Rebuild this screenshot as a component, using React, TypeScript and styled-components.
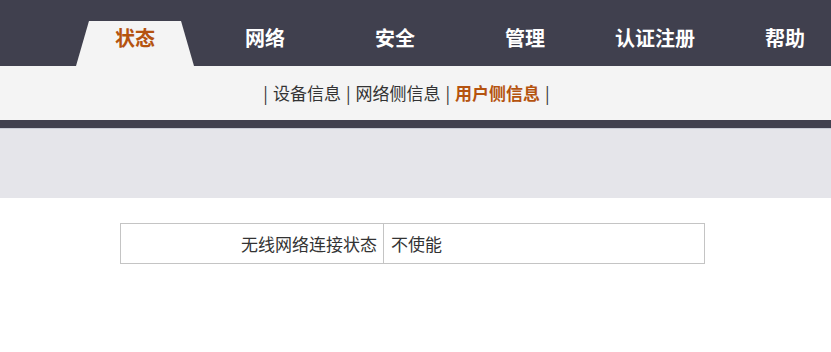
import React from "react";
import styled, { createGlobalStyle } from "styled-components";

const GlobalStyle = createGlobalStyle`
  html, body {
    margin: 0;
    padding: 0;
    background: #ffffff;
    font-family: "Noto Sans CJK SC", "Noto Sans", sans-serif;
  }
`;

const Header = styled.header`
  height: 66px;
  background: #40404e;
  display: flex;
  align-items: flex-end;
  padding-left: 76px;
`;

const Nav = styled.nav`
  display: flex;
  gap: 12px;
`;

const NavItem = styled.a<{ $active?: boolean }>`
  width: 118px;
  height: 45px;
  box-sizing: border-box;
  padding-top: 4px;
  display: flex;
  justify-content: center;
  font-size: 20px;
  font-weight: 700;
  line-height: 26px;
  color: ${(p) => (p.$active ? "#b5530f" : "#ffffff")};
  background: ${(p) => (p.$active ? "#f4f4f4" : "transparent")};
  clip-path: polygon(11% 0, 89% 0, 100% 100%, 0 100%);
  cursor: pointer;
`;

const SubBar = styled.div`
  height: 54px;
  background: #f4f4f4;
  display: flex;
  align-items: center;
  justify-content: center;
  font-size: 17px;
  color: #333333;
  padding-bottom: 1px;
  padding-right: 18px;
  box-sizing: border-box;
`;

const Sep = styled.span`
  margin: 0 5px;
  color: #333333;
`;

const SubLink = styled.span<{ $active?: boolean }>`
  color: ${(p) => (p.$active ? "#b5530f" : "#333333")};
  font-weight: ${(p) => (p.$active ? 700 : 400)};
`;

const Strip = styled.div`
  height: 8px;
  background: #41414f;
  border-bottom: 1px solid #c9ccd6;
`;

const Band = styled.div`
  height: 69px;
  background: #e5e5ea;
`;

const Content = styled.main`
  padding-top: 25px;
  display: flex;
  padding-left: 120px;
`;

const Table = styled.table`
  width: 585px;
  border-collapse: collapse;
  font-size: 17px;
  color: #333333;
`;

const Cell = styled.td<{ $label?: boolean }>`
  border: 1px solid #c4c4c4;
  height: 39px;
  padding: 0 6px 0 7px;
  text-align: ${(p) => (p.$label ? "right" : "left")};
  width: ${(p) => (p.$label ? "249px" : "auto")};
`;

const navItems = ["状态", "网络", "安全", "管理", "认证注册", "帮助"];
const subItems = ["设备信息", "网络侧信息", "用户侧信息"];

export default function App() {
  return (
    <>
      <GlobalStyle />
      <Header>
        <Nav>
          {navItems.map((n, i) => (
            <NavItem key={n} $active={i === 0}>
              {n}
            </NavItem>
          ))}
        </Nav>
      </Header>
      <SubBar>
        <Sep>|</Sep>
        {subItems.map((s, i) => (
          <React.Fragment key={s}>
            <SubLink $active={i === 2}>{s}</SubLink>
            <Sep>|</Sep>
          </React.Fragment>
        ))}
      </SubBar>
      <Strip />
      <Band />
      <Content>
        <Table>
          <tbody>
            <tr>
              <Cell $label>无线网络连接状态</Cell>
              <Cell>不使能</Cell>
            </tr>
          </tbody>
        </Table>
      </Content>
    </>
  );
}
